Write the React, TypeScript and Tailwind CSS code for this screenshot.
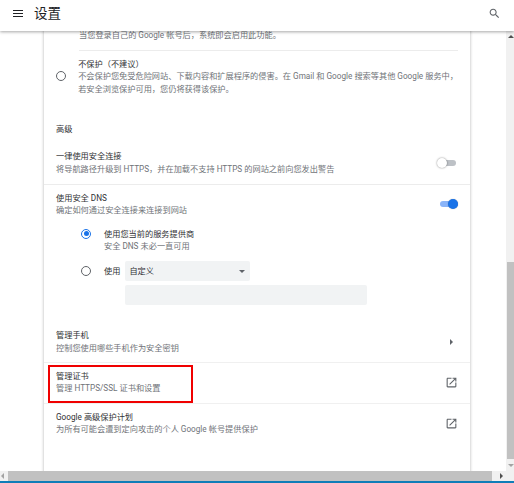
const title = "whitespace-nowrap text-[8.2px] leading-[12.5px] text-[#303134]";
const sub = "whitespace-nowrap text-[8.2px] leading-[12.5px] text-[#6f7378]";

function Radio({ checked }: { checked?: boolean }) {
  return (
    <span
      className={
        "flex h-[10px] w-[10px] shrink-0 items-center justify-center rounded-full border-[1.3px] " +
        (checked ? "border-[#1a73e8]" : "border-[#5f6368]")
      }
    >
      {checked && <span className="h-[5px] w-[5px] rounded-full bg-[#1a73e8]" />}
    </span>
  );
}

function ExternalIcon() {
  return (
    <svg viewBox="0 0 24 24" className="h-[13px] w-[13px] fill-[#5f6368]">
      <path d="M19 19H5V5h7V3H5c-1.11 0-2 .9-2 2v14c0 1.1.89 2 2 2h14c1.1 0 2-.9 2-2v-7h-2v7zM14 3v2h3.59l-9.83 9.83 1.41 1.41L19 6.41V10h2V3h-7z" />
    </svg>
  );
}

function Row({
  name,
  desc,
  right,
  className,
}: {
  name: string;
  desc: string;
  right: React.ReactNode;
  className?: string;
}) {
  return (
    <div className={"flex items-center justify-between pl-3 pr-3 " + (className ?? "")}>
      <div>
        <div className={title}>{name}</div>
        <div className={sub}>{desc}</div>
      </div>
      {right}
    </div>
  );
}

export default function App() {
  return (
    <div className="flex h-[483px] w-[514px] flex-col overflow-hidden bg-white font-['Roboto','Noto_Sans_CJK_SC',sans-serif]">
      <header className="relative z-10 flex h-[31px] shrink-0 items-center bg-white pb-[4px] pl-[13px] pr-[13px] shadow-[0_1px_3px_rgba(0,0,0,0.35)]">
        <div className="flex w-[10px] flex-col gap-[2px]">
          <span className="h-px bg-[#202124]" />
          <span className="h-px bg-[#202124]" />
          <span className="h-px bg-[#202124]" />
        </div>
        <h1 className="ml-[11px] text-[13.5px] leading-none text-[#202124]">设置</h1>
        <svg viewBox="0 0 24 24" className="ml-auto h-[13px] w-[13px] fill-[#5f6368]">
          <path d="M15.5 14h-.79l-.28-.27C15.41 12.59 16 11.11 16 9.5 16 5.91 13.09 3 9.5 3S3 5.91 3 9.5 5.91 16 9.5 16c1.61 0 3.09-.59 4.23-1.57l.27.28v.79l5 4.99L20.49 19l-4.99-5zm-6 0C7.01 14 5 11.99 5 9.5S7.01 5 9.5 5 14 7.01 14 9.5 11.99 14 9.5 14z" />
        </svg>
      </header>

      <div className="flex min-h-0 flex-1">
        <main className="relative min-w-0 flex-1 overflow-hidden">
          <section className="ml-[44px] h-[460px] w-[426px] bg-white shadow-[0_0_3px_rgba(0,0,0,0.3)]">
            <div className={sub + " -mt-[2px] pl-[35px]"}>当您登录自己的 Google 帐号后，系统即会启用此功能。</div>
            <div className="ml-[35px] mr-3 mt-[8px] h-px bg-[#ececec]" />

            <div className="mt-[7px] flex items-center pl-3 pr-3">
              <span className="w-[23px]">
                <Radio />
              </span>
              <div>
                <div className={title}>不保护（不建议）</div>
                <div className={sub}>
                  不会保护您免受危险网站、下载内容和扩展程序的侵害。在 Gmail 和 Google 搜索等其他 Google 服务中，
                </div>
                <div className={sub}>若安全浏览保护可用，您仍将获得该保护。</div>
              </div>
            </div>

            <div className={title + " mt-[27.5px] pl-3"}>高级</div>

            <Row
              className="mt-[15px]"
              name="一律使用安全连接"
              desc="将导航路径升级到 HTTPS，并在加载不支持 HTTPS 的网站之前向您发出警告"
              right={
                <span className="relative mr-[2px] block h-[6px] w-[18px] rounded-full bg-[#bdc1c6]">
                  <span className="absolute -left-[1px] -top-[2px] h-[10px] w-[10px] rounded-full bg-white shadow-[0_0_2px_rgba(0,0,0,0.5)]" />
                </span>
              }
            />
            <div className="mt-[8.5px] h-px bg-[#ececec]" />

            <Row
              className="mt-[7px]"
              name="使用安全 DNS"
              desc="确定如何通过安全连接来连接到网站"
              right={
                <span className="relative block h-[6px] w-[18px] rounded-full bg-[#8ab4f8]">
                  <span className="absolute right-0 -top-[2px] h-[10px] w-[10px] rounded-full bg-[#1a73e8] shadow-[0_0_1px_rgba(0,0,0,0.4)]" />
                </span>
              }
            />

            <div className="mt-[11px] flex items-start pl-[37px]">
              <span className="mt-[1px] w-[23px]">
                <Radio checked />
              </span>
              <div>
                <div className={title}>使用您当前的服务提供商</div>
                <div className={sub}>安全 DNS 未必一直可用</div>
              </div>
            </div>

            <div className="mt-[8.5px] flex items-center pl-[37px]">
              <span className="w-[23px]">
                <Radio />
              </span>
              <span className={title}>使用</span>
              <div className="ml-[5px] flex h-[20px] w-[125px] items-center justify-between rounded-[2px] bg-[#f1f3f4] pl-[4px] pr-[3px]">
                <span className={title}>自定义</span>
                <span className="mr-[2px] h-0 w-0 border-x-[3px] border-t-[3px] border-x-transparent border-t-[#5f6368]" />
              </div>
            </div>
            <div className="ml-[81px] mt-[4px] h-[20px] w-[242px] rounded-[2px] bg-[#f1f3f4]" />

            <Row
              className="mt-[24px]"
              name="管理手机"
              desc="控制您使用哪些手机作为安全密钥"
              right={
                <span className="mr-[5px] h-0 w-0 border-y-[3px] border-l-[3px] border-y-transparent border-l-[#5f6368]" />
              }
            />
            <div className="mt-[7.5px] h-px bg-[#f0f0f0]" />

            <Row
              className="mt-[7px]"
              name="管理证书"
              desc="管理 HTTPS/SSL 证书和设置"
              right={<ExternalIcon />}
            />
            <div className="mt-[8px] h-px bg-[#f0f0f0]" />

            <Row
              className="mt-[7px]"
              name="Google 高级保护计划"
              desc="为所有可能会遭到定向攻击的个人 Google 帐号提供保护"
              right={<ExternalIcon />}
            />
          </section>

          {/* red annotation round the certificates row */}
          <div className="absolute left-[48px] top-[334px] h-[38px] w-[145px] border-2 border-[#f00000]" />
        </main>

        <aside className="flex w-[8px] shrink-0 flex-col bg-[#f1f1f1]">
          <span className="ml-[2px] mt-[4px] h-0 w-0 border-x-[3px] border-b-[3px] border-x-transparent border-b-[#505050]" />
          <span className="ml-[1px] mt-[224px] h-[197px] w-[7px] bg-[#c1c1c1]" />
          <span className="ml-[2px] mt-[5px] h-0 w-0 border-x-[3px] border-t-[3px] border-x-transparent border-t-[#a3a3a3]" />
        </aside>
      </div>

      <div className="flex h-[10px] shrink-0 items-center bg-[#f1f1f1]">
        <span className="ml-[1px] h-0 w-0 border-y-[3px] border-r-[3px] border-y-transparent border-r-[#a3a3a3]" />
        <span className="ml-[4px] h-[10px] w-[484px] bg-[#c1c1c1]" />
        <span className="ml-[8px] h-0 w-0 border-y-[3px] border-l-[3px] border-y-transparent border-l-[#505050]" />
      </div>
      <div className="h-[2px] shrink-0 bg-[#0f7db8]" />
    </div>
  );
}
